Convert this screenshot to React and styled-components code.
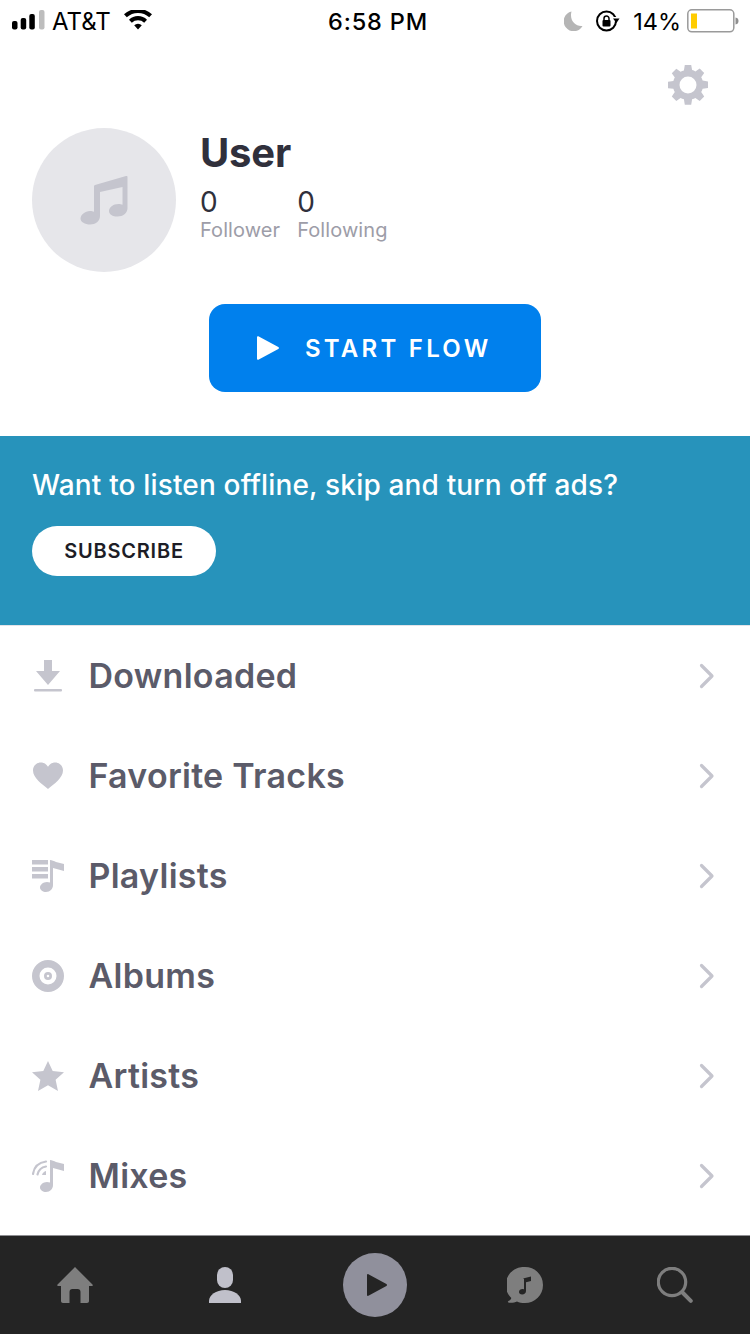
import React from "react";
import styled, { createGlobalStyle } from "styled-components";

const Global = createGlobalStyle`
  html, body { margin: 0; padding: 0; background: #fff; }
  body { font-family: Inter, "Liberation Sans", sans-serif; }
  * { box-sizing: border-box; }
`;
const Page = styled.div`
  width: 750px; height: 1334px; display: flex; flex-direction: column; overflow: hidden; background: #fff;
  & > * { flex-shrink: 0; }
`;
const StatusBar = styled.div`
  height: 40px; display: grid; grid-template-columns: 1fr auto 1fr; align-items: center; padding: 2px 10px 0 12px; color: #000;
  font-family: Inter, sans-serif; font-size: 24px;
`;
const StatusSide = styled.div`
  display: flex; align-items: center; justify-content: ${p => (p.$end ? "flex-end" : "flex-start")};
`;
const Carrier = styled.span`
  margin-left: 7px; font-size: 24px; letter-spacing: 0; margin-right: 13px;
`;
const Clock = styled.span`
  font-weight: 500; font-size: 23.5px; letter-spacing: 0.85px; margin-left: 4px;
`;
const Percent = styled.span`
  font-size: 23.5px; margin: 0 6px 0 13px; letter-spacing: 0;
`;
const Moon = styled.svg` margin-right: 13px; `;
const Wifi = styled.svg` margin-bottom: 2px; `;
const SettingsRow = styled.div`
  height: 88px; display: flex; justify-content: flex-end; align-items: flex-start; padding: 25px 42px 0 0;
`;
const Profile = styled.div`
  display: flex; padding-left: 32px; gap: 24px; height: 144px;
`;
const Avatar = styled.div`
  width: 144px; height: 144px; border-radius: 50%; background: #e6e6ea; display: flex; align-items: center; justify-content: center;
`;
const Info = styled.div` display: flex; flex-direction: column; `;
const Name = styled.div`
  font-size: 40px; font-weight: 700; line-height: 48px; color: #30303c; margin-top: 1px; letter-spacing: -0.2px;
`;
const Stats = styled.div` display: flex; gap: 17px; margin-top: 9px; `;
const Stat = styled.div` display: flex; flex-direction: column; `;
const StatValue = styled.div` font-size: 28px; line-height: 32px; color: #30303c; `;
const StatLabel = styled.div` font-size: 20px; line-height: 24px; color: #9d9da8; letter-spacing: 0.08px; `;
const FlowButton = styled.button`
  align-self: center; width: 332px; height: 88px; margin-top: 32px; border: 0; border-radius: 16px; background: #0080ed;
  color: #fff; display: flex; align-items: center; padding: 0 0 0 48px; font-family: inherit; font-size: 24px; font-weight: 600; letter-spacing: 3.25px;
`;
const FlowIcon = styled.svg` margin-right: 26px; `;
const Banner = styled.div`
  height: 190px; margin-top: 44px; background: #2793bb; padding: 30px 32px 0; border-bottom: 1px solid #e3e3e8;
`;
const BannerText = styled.div`
  color: #fff; font-size: 28px; line-height: 38px; font-weight: 500; letter-spacing: 0.16px;
`;
const Subscribe = styled.button`
  display: block; width: 184px; height: 50px; margin-top: 22px; border: 0; border-radius: 25px; background: #fff; color: #1d1d26;
  font-family: inherit; font-size: 20px; font-weight: 600; letter-spacing: 0.8px; padding: 0;
`;
const List = styled.div` display: flex; flex-direction: column; flex: 1 0 auto; `;
const Row = styled.div`
  height: 100px; display: flex; align-items: center; padding: 0 35px 0 32px;
`;
const RowIcon = styled.div`
  width: 32px; height: 32px; display: flex; align-items: center; justify-content: center; margin-right: 25px;
`;
const RowLabel = styled.div`
  flex: 1; font-size: 34px; font-weight: 600; color: #5b5b69; letter-spacing: 0.27px; margin: 0 0 2px -0.5px;
`;
const Nav = styled.nav`
  height: 99px; border-top: 1px solid #8e8e92; background: #242424; display: grid; grid-template-columns: repeat(5, 1fr); align-items: center;
`;
const NavItem = styled.div`
  display: flex; align-items: center; justify-content: center; height: 100%; padding-bottom: 1px;
`;
const PlayCircle = styled.div`
  width: 64px; height: 64px; border-radius: 50%; background: #90909c; display: flex; align-items: center; justify-content: center; padding-left: 3px;
`;

const I = "#c5c5ce";
const rows = [
  ["Downloaded", <svg width="32" height="32" viewBox="0 0 32 32" key="d"><path d="M12 0h8v11h8L16 25 4 11h8z" fill={I}/><rect x="2" y="29" width="28" height="2.4" rx="1" fill={I}/></svg>],
  ["Favorite Tracks", <svg width="32" height="32" viewBox="0 0 32 32" key="f"><path d="M16 29C10 24 1 18 1 10.500 1 5.500 4.800 2.500 8.800 2.500c3 0 5.600 1.500 7.200 4.300 1.600-2.800 4.200-4.300 7.200-4.300 4 0 7.800 3 7.800 8C31 18 22 24 16 29z" fill={I}/></svg>],
  ["Playlists", <svg width="32" height="32" viewBox="0 0 32 32" key="p"><g fill={I}><rect x="0" y="0" width="16" height="4.500"/><rect x="0" y="7" width="16" height="4.500"/><rect x="0" y="14" width="16" height="4.500"/><path d="M18 0c2 0 4 1 6 2l8 2v7l-11-3v17c0 4-3 7-7 7-3 0-6-2-6-4.500S11 22 15 22c1 0 2 .2 3 .6z"/></g></svg>],
  ["Albums", <svg width="32" height="32" viewBox="0 0 32 32" key="a"><path fillRule="evenodd" d="M16 0a16 16 0 1 0 0 32 16 16 0 0 0 0-32zm0 7.500a8.500 8.500 0 1 1 0 17 8.500 8.500 0 0 1 0-17zm0 4.500a4 4 0 1 0 0 8 4 4 0 0 0 0-8zm0 2.700a1.300 1.300 0 1 1 0 2.600 1.300 1.300 0 0 1 0-2.600z" fill={I}/></svg>],
  ["Artists", <svg width="32" height="32" viewBox="0 0 32 32" key="r"><path d="M16 1l4.700 10 11.300 1.300-8.400 7.500L26 31l-10-5.700L6 31l2.400-11.200L0 12.300 11.300 11z" fill={I}/></svg>],
  ["Mixes", <svg width="32" height="32" viewBox="0 0 32 32" key="m"><g fill={I}><path d="M18 0c2 0 4 1 6 2l8 2v7l-11-3v17c0 4-3 7-7 7-3 0-6-2-6-4.500S11 22 15 22c1 0 2 .2 3 .6z"/></g><g fill="none" stroke={I} strokeWidth="2.200" strokeLinecap="round"><path d="M1 14C2 7 7 2.500 14 1.500"/><path d="M5.500 14.500C6.500 10 9.500 7.300 14 6.500"/></g><path d="M10 15c.5-2 2-3.500 4-4v4z" fill={I}/></svg>],
];

const Chevron = () => (
  <svg width="16" height="26" viewBox="0 0 16 26"><path d="M2.500 2.500 13 13 2.500 23.500" fill="none" stroke="#c5c5ce" strokeWidth="3.200" strokeLinecap="round" strokeLinejoin="round"/></svg>
);

const Gear = () => (
  <svg width="40" height="40" viewBox="0 0 40 40">
    <path fillRule="evenodd" fill="#c5c5ce" d="M16.800 0h6.400l.9 5.100c1.200.3 2.300.8 3.300 1.400l4.300-3 4.500 4.500-3 4.300c.6 1 1.100 2.100 1.400 3.300l5.400.9v6.400l-5.400.9c-.3 1.200-.8 2.300-1.400 3.300l3 4.300-4.500 4.500-4.300-3c-1 .6-2.100 1.100-3.300 1.400l-.9 5.400h-6.400l-.9-5.400c-1.200-.3-2.300-.8-3.300-1.400l-4.300 3-4.500-4.500 3-4.300c-.6-1-1.100-2.100-1.400-3.300L0 23.200v-6.400l5.400-.9c.3-1.200.8-2.300 1.400-3.300l-3-4.300 4.500-4.500 4.300 3c1-.6 2.100-1.100 3.300-1.400zM20 11.500a8.500 8.500 0 1 0 0 17 8.500 8.500 0 0 0 0-17z"/>
  </svg>
);

export default function App() {
  return (
    <Page>
      <Global />
      <StatusBar>
        <StatusSide>
          <svg width="33" height="22" viewBox="0 0 33 22"><g fill="#000"><rect x="0" y="11" width="5.500" height="8.500" rx="2"/><rect x="8.700" y="8" width="5.500" height="11.500" rx="2"/><rect x="17.300" y="4" width="5.500" height="15.500" rx="2"/></g><rect x="27" y="0" width="5.500" height="19.500" rx="2" fill="#bdbdbd"/></svg>
          <Carrier>AT&amp;T</Carrier>
          <Wifi width="28" height="20" viewBox="0 0 28 20"><path d="M14 19.500l-3.800-4.200a5.500 5.500 0 0 1 7.600 0zM7.800 12.700 5 9.700a13 13 0 0 1 18 0l-2.800 3a9 9 0 0 0-12.400 0zM2.800 7.300 0 4.300a20.500 20.500 0 0 1 28 0l-2.800 3a16.500 16.500 0 0 0-22.400 0z" fill="#000"/></Wifi>
        </StatusSide>
        <Clock>6:58 PM</Clock>
        <StatusSide $end>
          <Moon width="19" height="20" viewBox="0 0 19 20"><path d="M7.500 0.500a10 10 0 1 0 11 14.500C12 16 5 10 7.500.5z" fill="#b5b5b5"/></Moon>
          <svg width="24" height="22" viewBox="0 0 24 22"><circle cx="10.500" cy="11" r="9.500" fill="none" stroke="#000" strokeWidth="2"/><rect x="17" y="7" width="5" height="3" fill="#fff"/><path d="M17 8.500h6.500L20.500 13z" fill="#000"/><rect x="6.500" y="10" width="8" height="6.500" rx="1" fill="#000"/><path d="M8 10.500V8.500a2.500 2.500 0 0 1 5 0v2" fill="none" stroke="#000" strokeWidth="1.500"/></svg>
          <Percent>14%</Percent>
          <svg width="53" height="24" viewBox="0 0 53 24"><rect x="0.800" y="0.800" width="46" height="22" rx="4" fill="#fff" stroke="#9a9a9a" strokeWidth="1.500"/><rect x="4" y="4.500" width="6" height="15" fill="#fc0"/><path d="M48.500 8.500c2 .3 3 1.500 3 3.500s-1 3.200-3 3.500z" fill="#8f8f8f"/></svg>
        </StatusSide>
      </StatusBar>
      <SettingsRow><Gear /></SettingsRow>
      <Profile>
        <Avatar>
          <svg width="50" height="50" viewBox="0 0 50 50"><path d="M16 10 47 1c1-.3 1.500.2 1.500 1v31c0 5-4.500 8.500-10 8.500-5 0-8.500-2-8.500-5.500s4-7 9.500-7c1.500 0 3 .3 4 .8V12L21 17v24c0 5-4.500 8.500-10 8.500C6 49.500 1.500 47 1.500 43.500S6 36 11 36c1.500 0 3 .3 4 .8V11c0-.5.500-.8 1-1z" fill="#c5c5ce"/></svg>
        </Avatar>
        <Info>
          <Name>User</Name>
          <Stats>
            <Stat><StatValue>0</StatValue><StatLabel>Follower</StatLabel></Stat>
            <Stat><StatValue>0</StatValue><StatLabel>Following</StatLabel></Stat>
          </Stats>
        </Info>
      </Profile>
      <FlowButton>
        <FlowIcon width="22" height="24" viewBox="0 0 22 24"><path d="M0 1.500C0 .4.800-.2 1.800.4l19.500 10.500c.9.500.9 1.700 0 2.200L1.800 23.600C.8 24.200 0 23.600 0 22.500z" fill="#fff"/></FlowIcon>
        START FLOW
      </FlowButton>
      <Banner>
        <BannerText>Want to listen offline, skip and turn off ads?</BannerText>
        <Subscribe>SUBSCRIBE</Subscribe>
      </Banner>
      <List>
        {rows.map(([label, icon]) => (
          <Row key={label}>
            <RowIcon>{icon}</RowIcon>
            <RowLabel>{label}</RowLabel>
            <Chevron />
          </Row>
        ))}
      </List>
      <Nav>
        <NavItem>
          <svg width="36" height="36" viewBox="0 0 36 36"><path d="M18 0 35.500 17.500c.7.800.2 1.500-.7 1.500H32v15c0 1-.8 2-2 2h-6.500V25c0-2-1-3-3-3h-5c-2 0-3 1-3 3v11H6c-1.200 0-2-1-2-2V19H1.200c-.9 0-1.400-.7-.7-1.500z" fill="#7e7e7e"/></svg>
        </NavItem>
        <NavItem>
          <svg width="32" height="36" viewBox="0 0 32 36"><rect x="8" y="0" width="16" height="21" rx="8" fill="#c0c0ca"/><path d="M0 36v-2c0-6 7-11 16-11s16 5 16 11v2z" fill="#c0c0ca"/></svg>
        </NavItem>
        <NavItem>
          <PlayCircle><svg width="20" height="22" viewBox="0 0 20 22"><path d="M0 1c0-.8.700-1.200 1.400-.8l18 9.800c.8.400.8 1.600 0 2L1.400 21.800C.700 22.200 0 21.800 0 21z" fill="#242424"/></svg></PlayCircle>
        </NavItem>
        <NavItem>
          <svg width="36" height="36" viewBox="0 0 36 36"><path d="M18 0a18 18 0 1 1 0 36c-3 0-6-.5-8-1.500-2 1-5 1.500-8 1.200-1.500-.3-1.500-1.200-.5-1.700 1.500-.7 2.500-1.800 2.800-3A18 18 0 0 1 18 0z" fill="#7e7e7e"/><path d="M16 11.500 24 9.500v4.500l-5 1.300V24c0 2-1.700 3.500-3.800 3.500-2 0-3.200-1-3.200-2.400 0-1.700 1.600-3 3.500-3 .6 0 1 .1 1.500.3V12z" fill="#242424"/></svg>
        </NavItem>
        <NavItem>
          <svg width="36" height="36" viewBox="0 0 36 36"><circle cx="15" cy="15" r="13.700" fill="none" stroke="#7e7e7e" strokeWidth="3.200"/><path d="M25.500 25.500 33.800 33.800" stroke="#7e7e7e" strokeWidth="4" strokeLinecap="round"/></svg>
        </NavItem>
      </Nav>
    </Page>
  );
}
